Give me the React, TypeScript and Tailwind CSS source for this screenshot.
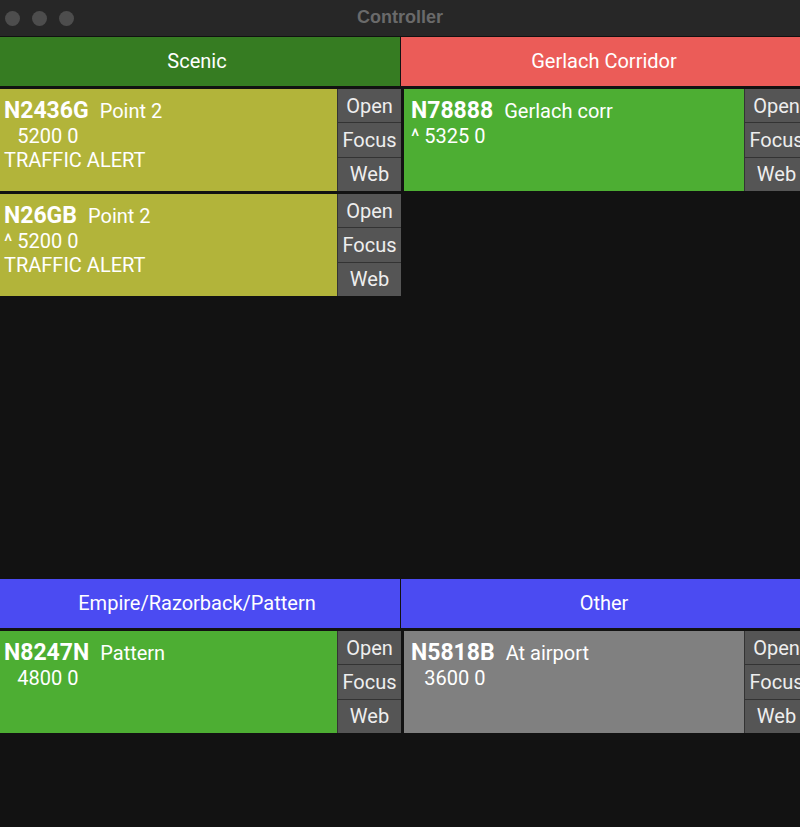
type Flight = {
  id: string;
  note: string;
  climb: boolean;
  alt: string;
  alert?: boolean;
  color: string;
};

type Group = {
  name: string;
  header: string;
  flights: Flight[];
};

const rows: Group[][] = [
  [
    {
      name: "Scenic",
      header: "bg-[#367c22]",
      flights: [
        { id: "N2436G", note: "Point 2", climb: false, alt: "5200 0", alert: true, color: "bg-[#b2b43a]" },
        { id: "N26GB", note: "Point 2", climb: true, alt: "5200 0", alert: true, color: "bg-[#b2b43a]" },
      ],
    },
    {
      name: "Gerlach Corridor",
      header: "bg-[#eb5c58]",
      flights: [{ id: "N78888", note: "Gerlach corr", climb: true, alt: "5325 0", color: "bg-[#4dae33]" }],
    },
  ],
  [
    {
      name: "Empire/Razorback/Pattern",
      header: "bg-[#4b4bf2]",
      flights: [{ id: "N8247N", note: "Pattern", climb: false, alt: "4800 0", color: "bg-[#4dae33]" }],
    },
    {
      name: "Other",
      header: "bg-[#4b4bf2]",
      flights: [{ id: "N5818B", note: "At airport", climb: false, alt: "3600 0", color: "bg-[#808080]" }],
    },
  ],
];

function FlightCard({ f }: { f: Flight }) {
  return (
    <div className="flex h-[102px]">
      <div className={`${f.color} w-[340px] shrink-0 px-[7px] pt-[9px] text-white`}>
        <div className="flex items-baseline leading-[26px]">
          <span className="text-[23px] font-bold">{f.id}</span>
          <span className="ml-[11px] text-[20px]">{f.note}</span>
        </div>
        <div className="text-[20px] leading-[24px]">
          <span className={f.climb ? "" : "invisible"}>^</span> {f.alt}
        </div>
        {f.alert && <div className="text-[20px] leading-[24px]">TRAFFIC ALERT</div>}
      </div>
      <div className="flex w-[64px] shrink-0 flex-col gap-px bg-[#333] pl-px">
        {["Open", "Focus", "Web"].map((b) => (
          <div key={b} className="flex flex-1 items-center justify-center bg-[#555] text-[20px] text-[#eee]">
            {b}
          </div>
        ))}
      </div>
    </div>
  );
}

export default function App() {
  return (
    <div className="h-[827px] w-[800px] overflow-hidden bg-[#121212] font-['Roboto',sans-serif]">
      <div className="relative flex h-[37px] items-center border-b border-[#111] bg-[#272727]">
        <div className="flex gap-[12px] pl-[5px]">
          <span className="h-[15px] w-[15px] rounded-full bg-[#4d4d4d]" />
          <span className="h-[15px] w-[15px] rounded-full bg-[#4d4d4d]" />
          <span className="h-[15px] w-[15px] rounded-full bg-[#4d4d4d]" />
        </div>
        <div className="absolute inset-0 flex items-center justify-center pb-px font-['Liberation_Sans',sans-serif] text-[18px] font-bold text-[#6a6a6a]">
          Controller
        </div>
      </div>
      <div className="-ml-[6px] flex flex-col gap-px">
        {rows.map((row, i) => (
          <div key={i} className="flex h-[541px] gap-px">
            {row.map((g) => (
              <div key={g.name} className="flex w-[406px] shrink-0 flex-col">
                <div className={`${g.header} flex h-[49px] items-center justify-center pb-px text-[20px] text-white`}>
                  {g.name}
                </div>
                <div className="flex flex-col gap-[3px] pl-[3px] pt-[3px]">
                  {g.flights.map((f) => (
                    <FlightCard key={f.id} f={f} />
                  ))}
                </div>
              </div>
            ))}
          </div>
        ))}
      </div>
    </div>
  );
}
